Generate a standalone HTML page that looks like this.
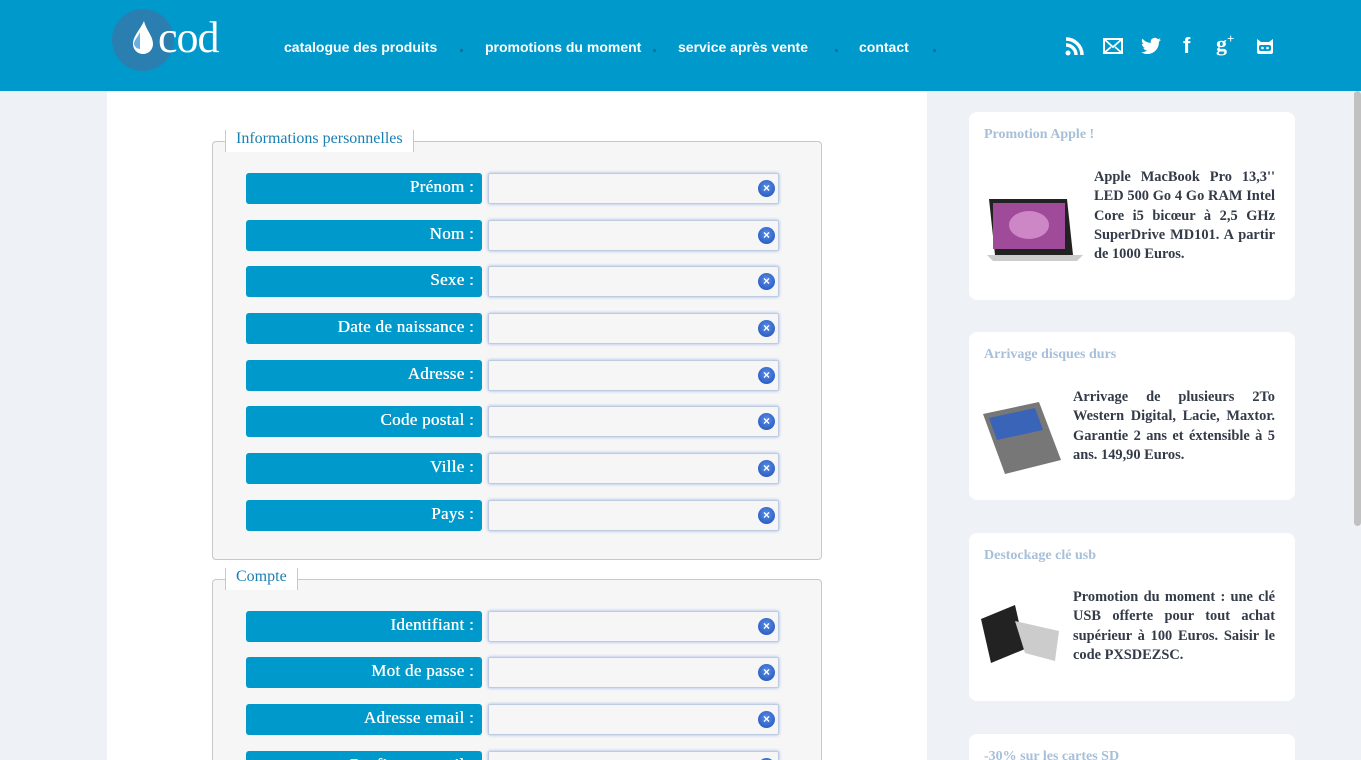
<!DOCTYPE html>
<html><head><meta charset="utf-8"><style>
*{margin:0;padding:0;box-sizing:border-box}
html,body{width:1361px;height:760px;overflow:hidden}
body{background:#eef2f7;font-family:"Liberation Serif",serif;position:relative}
.hdr{position:absolute;left:0;top:0;width:1361px;height:91px;background:#0099cb}
.logoc{position:absolute;left:112px;top:9px;width:62px;height:62px;border-radius:50%;background:#2a7fb0}
.logot{position:absolute;left:158px;top:12px;color:#fff;font:44px "Liberation Serif",serif;letter-spacing:-1px}
.nav{position:absolute;top:39px;color:#fff;font:bold 14px "Liberation Sans",sans-serif}
.dot{position:absolute;top:49px;width:3px;height:3px;background:#1a6e98}
.ico{position:absolute;top:36px}
.main{position:absolute;left:107px;top:91px;width:820px;height:669px;background:#fff}
.fs{position:absolute;left:212px;width:610px;border:1px solid #c8c8c8;border-radius:4px;background:#f6f6f6}
.lg{position:absolute;left:12px;top:-12px;background:#fff;padding:0 10px;border-left:1px solid #c8c8c8;border-right:1px solid #c8c8c8;color:#1a7fb3;font-size:16px;height:22px;line-height:18px}
.lbl{position:absolute;left:246px;width:236px;height:31px;background:#0099cb;border-radius:3px;color:#fff;font-size:17px;text-align:right;padding-right:8px;line-height:28px;text-shadow:0.4px 0 0 #fff;letter-spacing:.3px}
.inp{position:absolute;left:488px;width:291px;height:31px;background:#f6f6f6;border:1px solid #bfcbe0;border-radius:2px;box-shadow:0 0 3px #9fb8e8}
.x{position:absolute;right:3px;top:6px;width:17px;height:17px;border-radius:50%;background:radial-gradient(circle at 50% 40%,#5b8ee6,#1c4fb8);color:#fff;font:bold 12px "Liberation Sans",sans-serif;text-align:center;line-height:17px}
.card{position:absolute;left:969px;width:326px;background:#fff;border-radius:8px}
.ct{position:absolute;left:15px;top:15px;color:#a7bfd8;font-weight:bold;font-size:14px}
.cx{position:absolute;color:#333a48;font-weight:bold;font-size:14.4px;line-height:19.3px;text-align:justify}
.sb{position:absolute;left:1354px;top:91px;width:7px;height:435px;background:#c1c1c1;border-radius:4px}
</style></head><body>
<div class="hdr"></div>
<div class="logoc"></div>
<svg style="position:absolute;left:130px;top:20px" width="26" height="36" viewBox="0 0 26 36"><path d="M14 1 C10 10 3 16 3 24 A10 10 0 0 0 23 24 C23 16 16 10 14 1Z" fill="#fff"/><path d="M10 12 C8 17 4 20 4 24 A6 6 0 0 0 10 29 Z" fill="#6ab0de"/></svg>
<div class="logot">cod</div>
<div class="nav" style="left:284px">catalogue des produits</div>
<div class="nav" style="left:485px">promotions du moment</div>
<div class="nav" style="left:678px">service après vente</div>
<div class="nav" style="left:859px">contact</div>
<div class="dot" style="left:460px"></div><div class="dot" style="left:653px"></div><div class="dot" style="left:835px"></div><div class="dot" style="left:933px"></div>
<svg class="ico" style="left:1065px" width="20" height="20" viewBox="0 0 20 20"><circle cx="3" cy="17" r="2.5" fill="#fff"/><path d="M1 9a10 10 0 0 1 10 10M1 3a16 16 0 0 1 16 16" stroke="#fff" stroke-width="3.5" fill="none"/></svg>
<svg class="ico" style="left:1103px;top:38px" width="20" height="16" viewBox="0 0 20 16"><rect x="1" y="1" width="18" height="14" stroke="#fff" stroke-width="2" fill="none"/><path d="M1 1l9 8 9-8M1 15l7-6M19 15l-7-6" stroke="#fff" stroke-width="1.8" fill="none"/></svg>
<svg class="ico" style="left:1141px;top:37px" width="20" height="18" viewBox="0 0 24 20"><path d="M24 2.5c-.9.4-1.8.6-2.8.8 1-.6 1.8-1.6 2.2-2.7-1 .6-2 1-3.1 1.200A4.900 4.900 0 0 0 11.900 6.300 14 14 0 0 1 1.700 1.100a4.900 4.900 0 0 0 1.500 6.600c-.8 0-1.600-.3-2.200-.6 0 2.400 1.700 4.400 3.900 4.800-.7.2-1.500.2-2.200.1.6 2 2.400 3.400 4.600 3.400A9.900 9.900 0 0 1 0 17.400 14 14 0 0 0 7.500 19.600c9 0 14-7.500 14-14v-.6c1-.7 1.800-1.600 2.500-2.500z" fill="#fff"/></svg>
<div class="nav" style="left:1183px;top:33px;font:bold 22px 'Liberation Sans',sans-serif">f</div>
<div class="nav" style="left:1216px;top:31px;font:bold 22px 'Liberation Serif',serif">g<span style="font-size:13px;vertical-align:8px">+</span></div>
<svg class="ico" style="left:1255px" width="20" height="20" viewBox="0 0 20 20"><path d="M2 3l4 3h8l4-3v13a2 2 0 0 1-2 2H4a2 2 0 0 1-2-2z" fill="#fff"/><rect x="4" y="9" width="12" height="6" rx="2" fill="#0099cb"/><circle cx="7.5" cy="12" r="1.3" fill="#fff"/><circle cx="12.5" cy="12" r="1.3" fill="#fff"/></svg>
<div class="main"></div>
<div class="fs" style="top:141px;height:419px"><div class="lg">Informations personnelles</div></div>
<div class="fs" style="top:579px;height:200px"><div class="lg">Compte</div></div>

<div class="lbl" style="top:173px">Prénom :</div><div class="inp" style="top:173px"><div class="x">×</div></div>
<div class="lbl" style="top:220px">Nom :</div><div class="inp" style="top:220px"><div class="x">×</div></div>
<div class="lbl" style="top:266px">Sexe :</div><div class="inp" style="top:266px"><div class="x">×</div></div>
<div class="lbl" style="top:313px">Date de naissance :</div><div class="inp" style="top:313px"><div class="x">×</div></div>
<div class="lbl" style="top:360px">Adresse :</div><div class="inp" style="top:360px"><div class="x">×</div></div>
<div class="lbl" style="top:406px">Code postal :</div><div class="inp" style="top:406px"><div class="x">×</div></div>
<div class="lbl" style="top:453px">Ville :</div><div class="inp" style="top:453px"><div class="x">×</div></div>
<div class="lbl" style="top:500px">Pays :</div><div class="inp" style="top:500px"><div class="x">×</div></div>
<div class="lbl" style="top:611px">Identifiant :</div><div class="inp" style="top:611px"><div class="x">×</div></div>
<div class="lbl" style="top:657px">Mot de passe :</div><div class="inp" style="top:657px"><div class="x">×</div></div>
<div class="lbl" style="top:704px">Adresse email :</div><div class="inp" style="top:704px"><div class="x">×</div></div>
<div class="lbl" style="top:751px">Confirmer email :</div><div class="inp" style="top:751px"><div class="x">×</div></div>

<div class="card" style="top:112px;height:188px"><div class="ct">Promotion Apple !</div>
<svg style="position:absolute;left:10px;top:85px" width="106" height="66"><path d="M10 2h78l6 56H16z" fill="#222"/><rect x="14" y="6" width="72" height="46" fill="#a04a9a"/><ellipse cx="50" cy="28" rx="20" ry="14" fill="#e0a0d8" opacity=".7"/><path d="M8 58h96l-6 6H14z" fill="#ccc"/></svg>
<div class="cx" style="left:125px;top:56px;width:181px">Apple MacBook Pro 13,3'' LED 500 Go 4 Go RAM Intel Core i5 bicœur à 2,5 GHz SuperDrive MD101. A partir de 1000 Euros.</div></div>
<div class="card" style="top:332px;height:168px"><div class="ct">Arrivage disques durs</div>
<svg style="position:absolute;left:12px;top:68px" width="82" height="76"><path d="M2 14l56-12 22 58-56 14z" fill="#777"/><path d="M8 18l46-10 8 22-46 10z" fill="#3a64b8"/></svg>
<div class="cx" style="left:104px;top:56px;width:202px">Arrivage de plusieurs 2To Western Digital, Lacie, Maxtor. Garantie 2 ans et éxtensible à 5 ans. 149,90 Euros.</div></div>
<div class="card" style="top:533px;height:168px"><div class="ct">Destockage clé usb</div>
<svg style="position:absolute;left:10px;top:68px" width="86" height="76"><path d="M2 18l34-14 10 44-34 14z" fill="#222"/><path d="M36 20l44 10-4 30-30-8z" fill="#ccc"/></svg>
<div class="cx" style="left:104px;top:55px;width:202px">Promotion du moment : une clé USB offerte pour tout achat supérieur à 100 Euros. Saisir le code PXSDEZSC.</div></div>
<div class="card" style="top:734px;height:60px"><div class="ct">-30% sur les cartes SD</div></div>
<div class="sb"></div>
</body></html>
